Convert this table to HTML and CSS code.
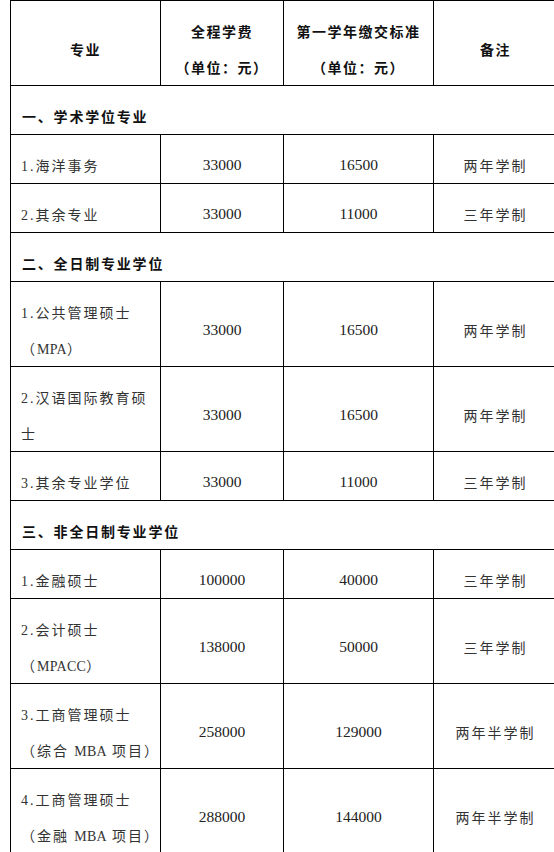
FILE: index.html
```html
<!DOCTYPE html>
<html lang="zh-CN">
<head>
<meta charset="utf-8">
<title>学费标准</title>
<link rel="stylesheet" href="styles.css">
</head>
<body>
<div class="wrap">
<table class="fees">
  <colgroup>
    <col class="c1"><col class="c2"><col class="c3"><col class="c4">
  </colgroup>
  <thead>
    <tr>
      <th class="mid">专业</th>
      <th>全程学费<br>（单位：元）</th>
      <th>第一学年缴交标准<br>（单位：元）</th>
      <th class="mid">备注</th>
    </tr>
  </thead>
  <tbody>
    <tr><td class="sec" colspan="4">一、学术学位专业</td></tr>
    <tr><td class="name"><span class="lat">1.</span>海洋事务</td><td class="num">33000</td><td class="num">16500</td><td class="note">两年学制</td></tr>
    <tr><td class="name"><span class="lat">2.</span>其余专业</td><td class="num">33000</td><td class="num">11000</td><td class="note">三年学制</td></tr>
    <tr><td class="sec" colspan="4">二、全日制专业学位</td></tr>
    <tr><td class="name"><span class="lat">1.</span>公共管理硕士<br>（<span class="lat ab">MPA</span>）</td><td class="num">33000</td><td class="num">16500</td><td class="note">两年学制</td></tr>
    <tr><td class="name"><span class="lat">2.</span>汉语国际教育硕<br>士</td><td class="num">33000</td><td class="num">16500</td><td class="note">两年学制</td></tr>
    <tr><td class="name"><span class="lat">3.</span>其余专业学位</td><td class="num">33000</td><td class="num">11000</td><td class="note">三年学制</td></tr>
    <tr><td class="sec" colspan="4">三、非全日制专业学位</td></tr>
    <tr><td class="name"><span class="lat">1.</span>金融硕士</td><td class="num">100000</td><td class="num">40000</td><td class="note">三年学制</td></tr>
    <tr><td class="name"><span class="lat">2.</span>会计硕士<br>（<span class="lat ab">MPACC</span>）</td><td class="num">138000</td><td class="num">50000</td><td class="note">三年学制</td></tr>
    <tr><td class="name"><span class="lat">3.</span>工商管理硕士<br>（综合 <span class="lat ab">MBA</span> 项目）</td><td class="num">258000</td><td class="num">129000</td><td class="note">两年半学制</td></tr>
    <tr><td class="name"><span class="lat">4.</span>工商管理硕士<br>（金融 <span class="lat ab">MBA</span> 项目）</td><td class="num">288000</td><td class="num">144000</td><td class="note">两年半学制</td></tr>
  </tbody>
</table>
</div>
</body>
</html>
```
FILE: styles.css
```css
html, body {
  margin: 0;
  padding: 0;
  background: #fff;
}
.wrap {
  width: 554px;
  overflow: hidden;
  padding-left: 10px;
  box-sizing: border-box;
}
.fees {
  border-collapse: collapse;
  table-layout: fixed;
  width: 547px;
  font-family: "Noto Sans CJK SC", sans-serif;
  font-size: 14px;
  color: #333;
}
.c1 { width: 150px; }
.c2 { width: 123px; }
.c3 { width: 150px; }
.c4 { width: 124px; }
.fees th, .fees td {
  border: 1px solid #000;
  padding: 12px 0 0 0;
  line-height: 36px;
  white-space: nowrap;
  vertical-align: middle;
}
.fees th {
  font-weight: 700;
  color: #111;
  text-align: center;
  letter-spacing: 1.5px;
  vertical-align: top;
}
.fees th.mid {
  vertical-align: middle;
}
.fees td.sec {
  font-weight: 700;
  color: #111;
  letter-spacing: 1.8px;
  padding-left: 11px;
}
.fees td.name {
  letter-spacing: 2px;
  padding-left: 10px;
}
.fees td.num {
  text-align: center;
  font-family: "Liberation Serif", serif;
  font-size: 15.5px;
  color: #222;
}
.fees td.note {
  text-align: center;
  letter-spacing: 2px;
}
.lat {
  font-family: "Liberation Serif", serif;
  letter-spacing: 2px;
  line-height: 1;
}
.lat.ab {
  letter-spacing: 0.3px;
}
```
